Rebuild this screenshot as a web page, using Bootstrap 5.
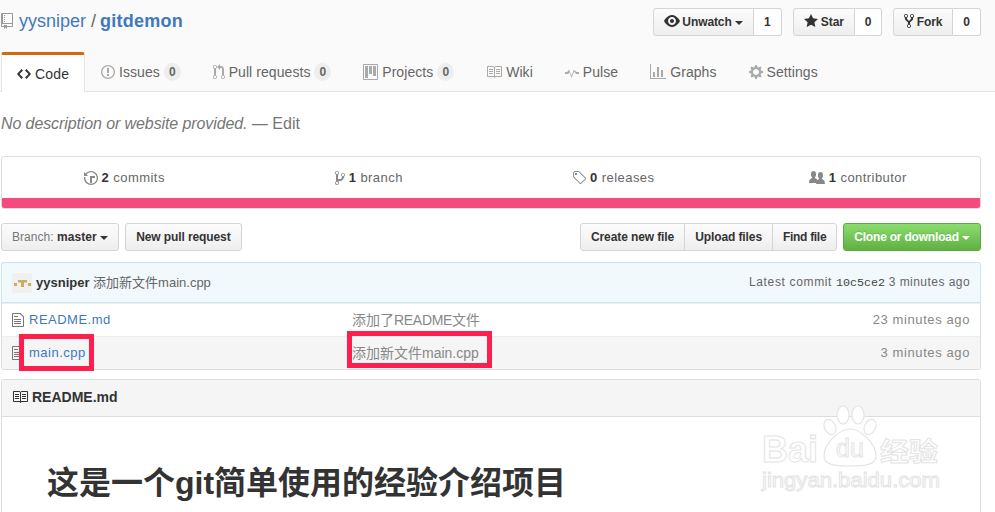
<!DOCTYPE html>
<html lang="en">
<head>
<meta charset="utf-8">
<title>gitdemon</title>
<link href="https://cdn.jsdelivr.net/npm/bootstrap@5.3.0/dist/css/bootstrap.min.css" rel="stylesheet">
<style>
html,body{height:512px;overflow:hidden}
body{font-family:"Liberation Sans","Noto Sans CJK SC",sans-serif;font-size:13px;color:#333;background:#fff;position:relative;line-height:20px}
svg.oct{fill:currentColor;display:inline-block;vertical-align:text-bottom;flex:none}
.page-head{background:#fafafa;border-bottom:1px solid #e5e5e5;height:92px;padding:8px 14px 0 1px}
.title-row{height:44px}
.repo-title{font-size:18px;line-height:27px;color:#666;margin:0;font-weight:400;white-space:nowrap}
.repo-title a{color:#4078c0;text-decoration:none}
.repo-title b{letter-spacing:.25px;margin-left:-1px}
.repo-title svg{color:#999;margin-right:6px;vertical-align:-2px}
.head-actions{gap:11px}
.gh-btn{font-size:12px;font-weight:700;line-height:20px;padding:3px 10px;color:#333;background:linear-gradient(#fcfcfc,#eee);border:1px solid #d5d5d5;border-radius:3px;white-space:nowrap;letter-spacing:-.1px}
.gh-btn svg{color:#333;vertical-align:-3px;margin-right:-1px}
.gh-btn svg.star-ic{margin-right:0}
.gh-count{font-size:12px;font-weight:700;line-height:20px;padding:3px 10px;color:#333;background:#fff;border:1px solid #d5d5d5;border-left:0;border-radius:0 3px 3px 0}
.caret-dn{display:inline-block;width:0;height:0;border:4px solid transparent;border-top-color:currentColor;border-bottom:0;vertical-align:middle;margin-left:0}
.tabs-row{gap:0;flex-wrap:nowrap;border:0;margin:0}
.tab-item{display:flex;align-items:center;height:40px;padding:0 16px;color:#666;font-size:14px;text-decoration:none;white-space:nowrap;gap:4px;letter-spacing:.07px}
.tab-item svg{color:#aaa}
.tab-item.on{background:#fff;color:#333;border:1px solid #e5e5e5;border-top:3px solid #d26911;border-bottom:0;border-radius:3px 3px 0 0;height:40px;width:84px;padding:0 15px;letter-spacing:.15px}
.tab-item.on svg{color:#333}
.tab-count{font-size:12px;font-weight:700;line-height:1;padding:3px 5px;border-radius:20px;background:#eee;color:#666;margin-left:0}
.main-col{padding:0 14px 0 1px}
.descr{font-size:16px;line-height:24px;color:#767676;margin:20px 0 0;height:44px}
.descr em{letter-spacing:-.1px}
.stats{border:1px solid #ddd;border-radius:3px;height:53px;overflow:hidden;background:#fff}
.stats-row{height:41px;margin:0}
.stat{display:flex;align-items:center;justify-content:center;gap:4px;padding:0;color:#666;font-size:13px;letter-spacing:.45px;white-space:nowrap}
.stat svg{color:#888}
.stat b{color:#333}
.lang-bar{height:10px;background:#f34b7d}
.toolbar{margin-top:14px;height:29px}
.tool-gap{gap:6px}
.branch-btn{letter-spacing:.05px}
.green-btn{color:#fff;background:linear-gradient(#8add6d,#60b044);border:1px solid #5ca941;text-shadow:0 -1px 0 rgba(0,0,0,.1);letter-spacing:-.2px}
.muted-lbl{color:#777;font-weight:400}
.tool-group .gh-btn{border-radius:0;margin-left:-1px}
.tool-group .gh-btn:first-child{border-radius:3px 0 0 3px;margin-left:0}
.tool-group .gh-btn:last-child{border-radius:0 3px 3px 0;letter-spacing:-.3px}
.files{margin-top:10px;border:1px solid #ddd;border-top:0;border-radius:3px}
.commit-tease{height:41px;background:#f2f9fc;border:1px solid #c9e6f2;border-radius:3px 3px 0 0;margin:0 -1px;padding:0 10px 0 10px;color:#666;font-size:12.5px}
.tease-msg{font-size:13px;color:#666;white-space:nowrap}
.tease-msg b{color:#333}
.avatar{width:20px;height:20px;background:#f0f0f0;border-radius:2px;fill:#c9ae5d;margin-right:4px;flex:none}
.tease-meta{color:#666;font-size:12px;letter-spacing:.45px;white-space:nowrap}
.tease-meta .lead-in{letter-spacing:.65px}
.tease-meta code{font-family:"Liberation Mono",monospace;font-size:11.7px;color:#444;letter-spacing:0}
.file-row{height:33px;padding:0 10px 0 10px;border-top:1px solid #eee;white-space:nowrap}
.file-row:first-of-type{border-top:0}
.file-row.alt{background:#f5f5f5}
.fname{width:340px;display:flex;align-items:center;gap:5px}
.fname svg{color:#777}
.fname a{color:#4078c0;text-decoration:none;letter-spacing:.5px}
.fmsg{color:#888;flex:1;font-size:14px}
.fmsg span{letter-spacing:-.3px}
.fage{color:#888;letter-spacing:.6px}
.readme{margin-top:9px;border:1px solid #ddd;border-radius:3px 3px 0 0;height:140px;overflow:hidden;background:#fff}
.readme-head{height:37px;background:#f5f5f5;border-bottom:1px solid #ddd;padding:0 11px 3px 10px;font-weight:700;font-size:14px;color:#333;gap:4px}
.readme-head svg{color:#333}
.readme-body{padding:48px 45px 0}
.readme-body h1{font-size:32px;line-height:36px;font-weight:700;margin:0;color:#333;white-space:nowrap}
.callout{position:absolute;border:5px solid #ff1f4f;pointer-events:none}
.callout-a{left:19px;top:334px;width:75px;height:37px}
.callout-b{left:347px;top:331px;width:145px;height:37px}
.mark-wm{position:absolute;left:760px;top:403px;width:182px;height:92px;pointer-events:none}
.mark-wm text{fill:#fff;stroke:#e4e4e4;stroke-width:1}
</style>
</head>
<body>
<header class="page-head">
  <div class="title-row d-flex justify-content-between align-items-start">
    <h1 class="repo-title"><svg class="oct" width="12" height="16" viewBox="0 0 12 16"><path d="M4 9H3V8h1v1zm0-3H3v1h1V6zm0-2H3v1h1V4zm0-2H3v1h1V2zm8-1v12c0 .55-.45 1-1 1H6v2l-1.5-1.5L3 16v-2H1c-.55 0-1-.45-1-1V1c0-.55.45-1 1-1h10c.55 0 1 .45 1 1zm-1 10H1v2h2v-1h3v1h5v-2zm0-10H2v9h9V1z"/></svg><a href="#">yysniper</a> / <a href="#"><b>gitdemon</b></a></h1>
    <div class="d-flex head-actions align-items-start">
      <div class="d-flex"><span class="gh-btn rounded-end-0"><svg class="oct" width="16" height="16" viewBox="0 0 16 16"><path d="M8.06 2C3 2 0 8 0 8s3 6 8.06 6C13 14 16 8 16 8s-3-6-7.94-6zM8 12c-2.2 0-4-1.78-4-4 0-2.2 1.8-4 4-4 2.22 0 4 1.8 4 4 0 2.22-1.78 4-4 4zm2-4c0 1.11-.89 2-2 2-1.11 0-2-.89-2-2 0-1.11.89-2 2-2 1.11 0 2 .89 2 2z"/></svg> Unwatch <i class="caret-dn"></i></span><span class="gh-count">1</span></div>
      <div class="d-flex"><span class="gh-btn rounded-end-0"><svg class="oct star-ic" width="14" height="16" viewBox="0 0 14 16"><path d="M14 6l-4.9-.64L7 1 4.9 5.36 0 6l3.6 3.26L2.67 14 7 11.67 11.33 14l-.93-4.74L14 6z"/></svg> Star</span><span class="gh-count">0</span></div>
      <div class="d-flex"><span class="gh-btn rounded-end-0"><svg class="oct" width="10" height="16" viewBox="0 0 10 16"><path d="M8 1a1.993 1.993 0 0 0-1 3.72V6L5 8 3 6V4.72A1.993 1.993 0 0 0 2 1a1.993 1.993 0 0 0-1 3.72V6.5l3 3v1.78A1.993 1.993 0 0 0 5 15a1.993 1.993 0 0 0 1-3.72V9.5l3-3V4.72A1.993 1.993 0 0 0 8 1zM2 4.2C1.34 4.2.8 3.65.8 3c0-.65.55-1.2 1.2-1.2.65 0 1.2.55 1.2 1.2 0 .65-.55 1.2-1.2 1.2zm3 10c-.66 0-1.2-.55-1.2-1.2 0-.65.55-1.2 1.2-1.2.65 0 1.2.55 1.2 1.2 0 .65-.55 1.2-1.2 1.2zm3-10c-.66 0-1.2-.55-1.2-1.2 0-.65.55-1.2 1.2-1.2.65 0 1.2.55 1.2 1.2 0 .65-.55 1.2-1.2 1.2z"/></svg> Fork</span><span class="gh-count">0</span></div>
    </div>
  </div>
  <nav class="nav tabs-row">
    <a class="tab-item on" href="#"><svg class="oct" width="14" height="16" viewBox="0 0 14 16"><path d="M9.5 3L8 4.5 11.5 8 8 11.5 9.5 13 14 8 9.5 3zm-5 0L0 8l4.5 5L6 11.5 2.5 8 6 4.5 4.5 3z"/></svg>Code</a>
    <a class="tab-item" href="#"><svg class="oct" width="14" height="16" viewBox="0 0 14 16"><path d="M7 2.3c3.14 0 5.7 2.56 5.7 5.7s-2.56 5.7-5.7 5.7A5.71 5.71 0 0 1 1.3 8c0-3.14 2.56-5.7 5.7-5.7zM7 1C3.14 1 0 4.14 0 8s3.14 7 7 7 7-3.14 7-7-3.14-7-7-7zm1 3H6v5h2V4zm0 6H6v2h2v-2z"/></svg>Issues <span class="tab-count">0</span></a>
    <a class="tab-item" href="#"><svg class="oct" width="12" height="16" viewBox="0 0 12 16"><path d="M11 11.28V5c-.03-.78-.34-1.47-.94-2.06C9.46 2.35 8.78 2.03 8 2H7V0L4 3l3 3V4h1c.27.02.48.11.69.31.21.2.3.42.31.69v6.28A1.993 1.993 0 0 0 10 15a1.993 1.993 0 0 0 1-3.72zm-1 2.92c-.66 0-1.2-.55-1.2-1.2 0-.65.55-1.2 1.2-1.2.65 0 1.2.55 1.2 1.2 0 .65-.55 1.2-1.2 1.2zM4 3c0-1.11-.89-2-2-2a1.993 1.993 0 0 0-1 3.72v6.56A1.993 1.993 0 0 0 2 15a1.993 1.993 0 0 0 1-3.72V4.72c.59-.34 1-.98 1-1.72zm-.8 10c0 .66-.55 1.2-1.2 1.2-.65 0-1.2-.55-1.2-1.2 0-.65.55-1.2 1.2-1.2.65 0 1.2.55 1.2 1.2zM2 4.2C1.34 4.2.8 3.65.8 3c0-.65.55-1.2 1.2-1.2.65 0 1.2.55 1.2 1.2 0 .65-.55 1.2-1.2 1.2z"/></svg>Pull requests <span class="tab-count">0</span></a>
    <a class="tab-item" href="#"><svg class="oct" width="15" height="16" viewBox="0 0 15 16"><path fill-rule="evenodd" d="M14 0H1a1 1 0 0 0-1 1v14a1 1 0 0 0 1 1h13a1 1 0 0 0 1-1V1a1 1 0 0 0-1-1zM1 1h13v14H1zM2 2h3v12H2zM6 2h3v8H6zM10 2h3v10h-3z"/></svg>Projects <span class="tab-count">0</span></a>
    <a class="tab-item" href="#"><svg class="oct" width="16" height="16" viewBox="0 0 16 16"><path d="M3 5h4v1H3V5zm0 3h4V7H3v1zm0 2h4V9H3v1zm11-5h-4v1h4V5zm0 2h-4v1h4V7zm0 2h-4v1h4V9zm2-6v9c0 .55-.45 1-1 1H9.5l-1 1-1-1H2c-.55 0-1-.45-1-1V3c0-.55.45-1 1-1h5.5l1 1 1-1H15c.55 0 1 .45 1 1zm-8 .5L7.5 3H2v9h6V3.5zm7-.5H9.5l-.5.5V12h6V3z"/></svg>Wiki</a>
    <a class="tab-item" href="#"><svg class="oct" width="14" height="16" viewBox="0 0 14 16"><path d="M11.5 8L8.8 5.8 6.5 12 4 5.5 2.2 8H0v2h3.2l1.3-1.7 2 5.7L9.2 7.2 11 10h3V8h-2.5z"/></svg>Pulse</a>
    <a class="tab-item" href="#"><svg class="oct" width="16" height="16" viewBox="0 0 16 16"><path d="M16 14v1H0V0h1v14h15zM5 13H3V8h2v5zm4 0H7V3h2v10zm4 0h-2V6h2v7z"/></svg>Graphs</a>
    <a class="tab-item" href="#"><svg class="oct" width="14" height="16" viewBox="0 0 14 16"><path d="M14 8.77v-1.6l-1.94-.64-.45-1.09.88-1.84-1.13-1.13-1.81.91-1.09-.45-.69-1.92h-1.6l-.63 1.94-1.11.45-1.84-.88-1.13 1.13.91 1.81-.45 1.09L0 7.23v1.59l1.94.64.45 1.09-.88 1.84 1.13 1.13 1.81-.91 1.09.45.69 1.92h1.59l.63-1.94 1.11-.45 1.84.88 1.13-1.13-.92-1.81.47-1.09L14 8.75v.02zM7 11c-1.66 0-3-1.34-3-3s1.34-3 3-3 3 1.34 3 3-1.34 3-3 3z"/></svg>Settings</a>
  </nav>
</header>
<main class="main-col">
  <p class="descr"><em>No description or website provided.</em> — Edit</p>
  <section class="stats">
    <div class="row g-0 stats-row">
      <div class="col-3 stat"><svg class="oct" width="14" height="16" viewBox="0 0 14 16"><path d="M8 13H6V6h5v2H8v5zM7 1C4.81 1 2.87 2.02 1.59 3.59L0 2v4h4L2.5 4.5C3.55 3.17 5.17 2.3 7 2.3c3.14 0 5.7 2.56 5.7 5.7s-2.56 5.7-5.7 5.7A5.71 5.71 0 0 1 1.3 8c0-.34.03-.67.09-1H.08C.03 7.33 0 7.66 0 8c0 3.86 3.14 7 7 7s7-3.14 7-7-3.14-7-7-7z"/></svg><span><b>2</b> commits</span></div>
      <div class="col-3 stat"><svg class="oct" width="10" height="16" viewBox="0 0 10 16"><path d="M10 5c0-1.11-.89-2-2-2a1.993 1.993 0 0 0-1 3.72v.3c-.02.52-.23.98-.63 1.38-.4.4-.86.61-1.38.63-.83.02-1.48.16-2 .45V4.72a1.993 1.993 0 0 0-1-3.72C.88 1 0 1.89 0 3a2 2 0 0 0 1 1.72v6.56c-.59.35-1 .99-1 1.72 0 1.11.89 2 2 2 1.11 0 2-.89 2-2 0-.53-.2-1-.53-1.36.09-.06.48-.41.59-.47.25-.11.56-.17.94-.17 1.05-.05 1.95-.45 2.75-1.25S8.95 7.77 9 6.73h-.02C9.59 6.37 10 5.73 10 5zM2 1.8c.66 0 1.2.55 1.2 1.2 0 .65-.55 1.2-1.2 1.2C1.35 4.2.8 3.65.8 3c0-.65.55-1.2 1.2-1.2zm0 12.41c-.66 0-1.2-.55-1.2-1.2 0-.65.55-1.2 1.2-1.2.65 0 1.2.55 1.2 1.2 0 .65-.55 1.2-1.2 1.2zm6-8c-.66 0-1.2-.55-1.2-1.2 0-.65.55-1.2 1.2-1.2.65 0 1.2.55 1.2 1.2 0 .65-.55 1.2-1.2 1.2z"/></svg><span><b>1</b> branch</span></div>
      <div class="col-3 stat"><svg class="oct" width="14" height="16" viewBox="0 0 14 16"><path d="M7.73 1.73C7.26 1.26 6.62 1 5.96 1H3.5C2.13 1 1 2.13 1 3.5v2.47c0 .66.27 1.3.73 1.77l6.06 6.06c.39.39 1.02.39 1.41 0l4.59-4.59a.996.996 0 0 0 0-1.41L7.73 1.73zM2.38 7.09c-.31-.3-.47-.7-.47-1.13V3.5c0-.88.72-1.59 1.59-1.59h2.47c.42 0 .83.16 1.13.47l6.14 6.13-4.73 4.73-6.13-6.15zM3.01 3h2v2H3V3h.01z"/></svg><span><b>0</b> releases</span></div>
      <div class="col-3 stat"><svg class="oct" width="16" height="16" viewBox="0 0 16 16"><path d="M16 12.999c0 .439-.45 1-1 1H7.995c-.539 0-.994-.447-.995-.999H1c-.54 0-1-.561-1-1 0-2.634 3-4 3-4s.229-.409 0-1c-.841-.621-1.058-.59-1-3 .058-2.419 1.367-3 2.5-3s2.442.58 2.5 3c.058 2.41-.159 2.379-1 3-.229.59 0 1 0 1s1.549.711 2.42 2.088C9.196 9.369 10 8.999 10 8.999s.229-.409 0-1c-.841-.62-1.058-.59-1-3 .058-2.419 1.367-3 2.5-3s2.437.581 2.495 3c.059 2.41-.158 2.38-1 3-.229.59 0 1 0 1s3.005 1.366 3.005 4"/></svg><span><b>1</b> contributor</span></div>
    </div>
    <div class="lang-bar"></div>
  </section>
  <div class="toolbar d-flex justify-content-between align-items-start">
    <div class="d-flex tool-gap">
      <span class="gh-btn branch-btn"><span class="muted-lbl">Branch:</span> master <i class="caret-dn"></i></span>
      <span class="gh-btn">New pull request</span>
    </div>
    <div class="d-flex tool-gap">
      <div class="d-flex tool-group"><span class="gh-btn">Create new file</span><span class="gh-btn">Upload files</span><span class="gh-btn">Find file</span></div>
      <span class="gh-btn green-btn">Clone or download <i class="caret-dn"></i></span>
    </div>
  </div>
  <section class="files">
    <div class="commit-tease d-flex justify-content-between align-items-center">
      <div class="tease-msg d-flex align-items-center"><svg class="avatar" viewBox="0 0 20 20"><rect x="2" y="10" width="3" height="3"/><rect x="6" y="7" width="9" height="2.5"/><rect x="9" y="7" width="3" height="7"/><rect x="16" y="10" width="3" height="3"/></svg><span><b>yysniper</b> 添加新文件main.cpp</span></div>
      <div class="tease-meta"><span class="lead-in">Latest commit</span> <code>10c5ce2</code> 3 minutes ago</div>
    </div>
    <div class="file-row d-flex align-items-center"><div class="fname"><svg class="oct" width="12" height="16" viewBox="0 0 12 16"><path d="M6 5H2V4h4v1zM2 8h7V7H2v1zm0 2h7V9H2v1zm0 2h7v-1H2v1zm10-7.5V14c0 .55-.45 1-1 1H1c-.55 0-1-.45-1-1V2c0-.55.45-1 1-1h7.5L12 4.5zM11 5L8 2H1v12h10V5z"/></svg><a href="#">README.md</a></div><div class="fmsg">添加了<span>README</span>文件</div><div class="fage">23 minutes ago</div></div>
    <div class="file-row alt d-flex align-items-center"><div class="fname"><svg class="oct" width="12" height="16" viewBox="0 0 12 16"><path d="M6 5H2V4h4v1zM2 8h7V7H2v1zm0 2h7V9H2v1zm0 2h7v-1H2v1zm10-7.5V14c0 .55-.45 1-1 1H1c-.55 0-1-.45-1-1V2c0-.55.45-1 1-1h7.5L12 4.5zM11 5L8 2H1v12h10V5z"/></svg><a href="#">main.cpp</a></div><div class="fmsg">添加新文件main.cpp</div><div class="fage">3 minutes ago</div></div>
  </section>
  <section class="readme">
    <div class="readme-head d-flex align-items-center"><svg class="oct" width="16" height="16" viewBox="0 0 16 16"><path d="M3 5h4v1H3V5zm0 3h4V7H3v1zm0 2h4V9H3v1zm11-5h-4v1h4V5zm0 2h-4v1h4V7zm0 2h-4v1h4V9zm2-6v9c0 .55-.45 1-1 1H9.5l-1 1-1-1H2c-.55 0-1-.45-1-1V3c0-.55.45-1 1-1h5.5l1 1 1-1H15c.55 0 1 .45 1 1zm-8 .5L7.5 3H2v9h6V3.5zm7-.5H9.5l-.5.5V12h6V3z"/></svg>README.md</div>
    <div class="readme-body"><h1>这是一个git简单使用的经验介绍项目</h1></div>
  </section>
</main>
<div class="callout callout-a"></div>
<div class="callout callout-b"></div>
<svg class="mark-wm" viewBox="0 0 182 92">
  <g fill="#fff" stroke="#e4e4e4" stroke-width="1.2">
    <ellipse cx="83" cy="12" rx="6" ry="9"/><ellipse cx="98" cy="12" rx="6" ry="9"/><ellipse cx="70" cy="24" rx="5.5" ry="8" transform="rotate(-25 70 24)"/><ellipse cx="110" cy="24" rx="5.5" ry="8" transform="rotate(25 110 24)"/>
    <path d="M90 26c10 0 26 14 26 27 0 9-11 10-26 10s-26-1-26-10c0-13 16-27 26-27z"/>
  </g>
  <text x="2" y="59" font-family="Liberation Sans" font-size="36" font-weight="700">Bai</text>
  <text x="76" y="54" font-family="Liberation Sans" font-size="25">du</text>
  <text x="120" y="58" font-family="Noto Sans CJK SC" font-size="26" font-weight="700" textLength="58" lengthAdjust="spacingAndGlyphs">经验</text>
  <text x="2" y="84" font-family="Liberation Sans" font-size="21" textLength="178" lengthAdjust="spacingAndGlyphs">jingyan.baidu.com</text>
</svg>
<script src="https://cdn.jsdelivr.net/npm/bootstrap@5.3.0/dist/js/bootstrap.bundle.min.js"></script>
</body>
</html>
